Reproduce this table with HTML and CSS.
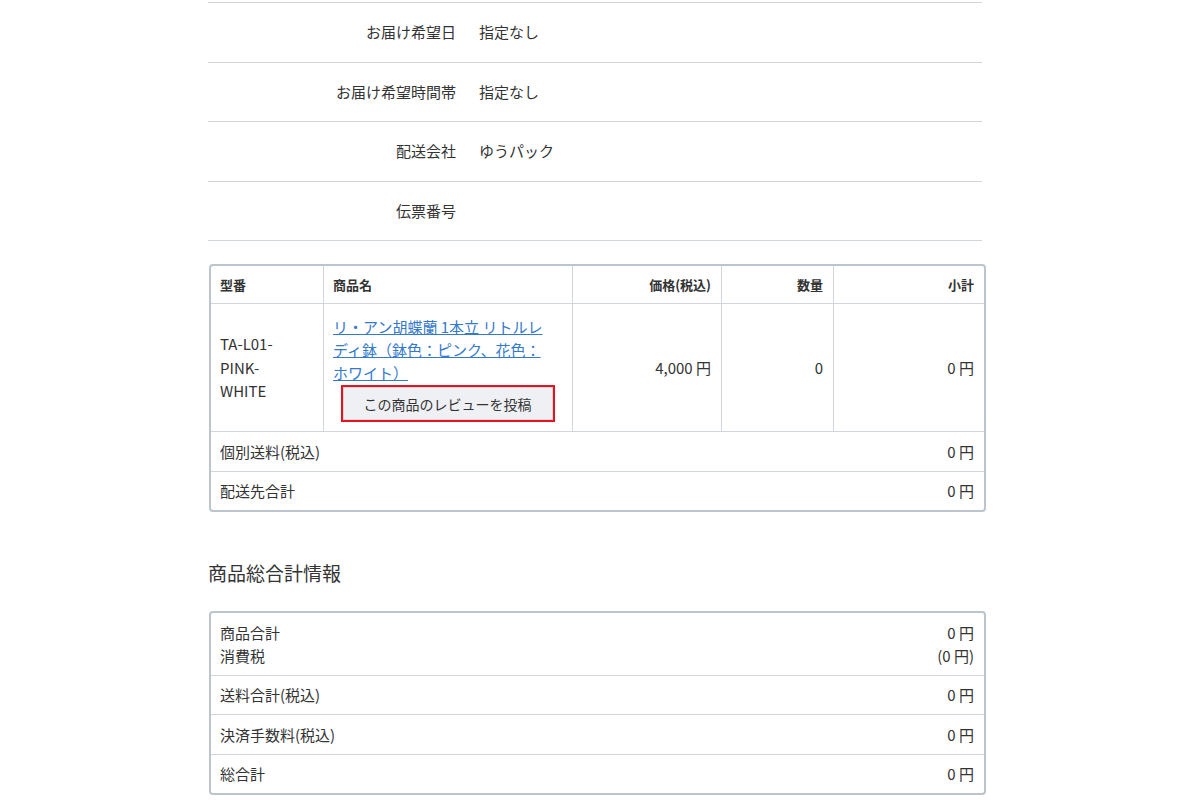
FILE: index.html
```html
<!DOCTYPE html>
<html lang="ja">

<head>
    <meta charset="UTF-8">
    <meta name="viewport" content="width=device-width, initial-scale=1.0">
    <title>ご注文履歴詳細</title>
    <link rel="stylesheet" href="styles.css">
</head>

<body>
    <div class="wrap">
        <dl class="info">
            <div class="info-row">
                <dt>お届け希望日</dt>
                <dd>指定なし</dd>
            </div>
            <div class="info-row">
                <dt>お届け希望時間帯</dt>
                <dd>指定なし</dd>
            </div>
            <div class="info-row">
                <dt>配送会社</dt>
                <dd>ゆうパック</dd>
            </div>
            <div class="info-row">
                <dt>伝票番号</dt>
                <dd></dd>
            </div>
        </dl>

        <div class="box">
            <table class="items">
                <thead>
                    <tr>
                        <th class="col-code">型番</th>
                        <th class="col-name">商品名</th>
                        <th class="col-price num">価格(税込)</th>
                        <th class="col-qty num">数量</th>
                        <th class="num">小計</th>
                    </tr>
                </thead>
                <tbody>
                    <tr>
                        <td class="code"><span class="code-text">TA-L01-PINK-WHITE</span></td>
                        <td class="name">
                            <a href="#" class="item-link">リ・アン胡蝶蘭 1本立 リトルレディ鉢（鉢色：ピンク、花色：ホワイト）</a>
                            <button class="review-btn">この商品のレビューを投稿</button>
                        </td>
                        <td class="num">4,000 円</td>
                        <td class="num">0</td>
                        <td class="num">0 円</td>
                    </tr>
                    <tr class="sum-row">
                        <td colspan="4">個別送料(税込)</td>
                        <td class="num">0 円</td>
                    </tr>
                    <tr class="sum-row">
                        <td colspan="4">配送先合計</td>
                        <td class="num">0 円</td>
                    </tr>
                </tbody>
            </table>
        </div>

        <h2>商品総合計情報</h2>

        <div class="box">
            <table class="totals">
                <tr class="sum-row">
                    <td>商品合計<br>消費税</td>
                    <td class="num">0 円<br>(0 円)</td>
                </tr>
                <tr class="sum-row">
                    <td>送料合計(税込)</td>
                    <td class="num">0 円</td>
                </tr>
                <tr class="sum-row">
                    <td>決済手数料(税込)</td>
                    <td class="num">0 円</td>
                </tr>
                <tr class="sum-row">
                    <td>総合計</td>
                    <td class="num">0 円</td>
                </tr>
            </table>
        </div>
    </div>
</body>

</html>
```

FILE: styles.css
```css
body {
    margin: 0;
    font-family: "Noto Sans CJK JP", "Noto Sans", sans-serif;
    font-size: 15px;
    color: #333;
    background: #fff;
}

.wrap {
    width: 778px;
    margin-left: 208px;
    padding-top: 2px;
}

.info {
    width: 774px;
    margin: 0;
    border-top: 1px solid #cfd5db;
}

.info-row {
    display: grid;
    grid-template-columns: 263px 1fr;
    border-bottom: 1px solid #cfd5db;
}

.info dt,
.info dd {
    margin: 0;
    padding: 18px 0;
    line-height: 22.5px;
}

.info dt {
    text-align: right;
    padding-right: 15px;
}

.info dd {
    padding-left: 8px;
}

.box {
    margin-top: 23px;
    margin-left: 1px;
    border: 2px solid #bcc5cd;
    border-radius: 4px;
    overflow: hidden;
}

table {
    width: 100%;
    border-collapse: collapse;
}

th,
td {
    padding: 8px 10px 8px 9px;
    line-height: 23px;
    text-align: left;
    vertical-align: middle;
    border: 1px solid #d0d6dc;
}

tr:first-child th,
tr:first-child td {
    border-top: 0;
}

tr:last-child td {
    border-bottom: 0;
}

th:first-child,
td:first-child {
    border-left: 0;
}

th:last-child,
td:last-child {
    border-right: 0;
}

.sum-row td {
    padding-top: 7.75px;
    padding-bottom: 7.75px;
    border-left: 0;
    border-right: 0;
}

th {
    font-size: 13px;
    font-weight: bold;
    padding-top: 7px;
    padding-bottom: 7px;
}

.num {
    text-align: right;
}

.col-code {
    width: 93px;
}

.col-name {
    width: 229px;
}

.col-price {
    width: 129px;
}

.col-qty {
    width: 92px;
}

.code-text {
    display: block;
    max-width: 66px;
    line-height: 23.5px;
}

.name {
    padding-top: 11px;
    padding-bottom: 11px;
}

.item-link {
    display: block;
    max-width: 222px;
    color: #3479cc;
    text-decoration: underline;
}

.review-btn {
    display: block;
    margin: 3px auto 0;
    width: 210px;
    height: 33px;
    padding: 0;
    font-family: inherit;
    font-size: 14px;
    color: #333;
    background: #eef0f3;
    border: 1px solid #d4d8dc;
    outline: 2px solid #e5131f;
    outline-offset: 0;
}

h2 {
    margin: 47px 0 0;
    font-size: 19px;
    font-weight: normal;
    line-height: 28px;
}

.box + h2 + .box {
    margin-top: 24px;
}
```
